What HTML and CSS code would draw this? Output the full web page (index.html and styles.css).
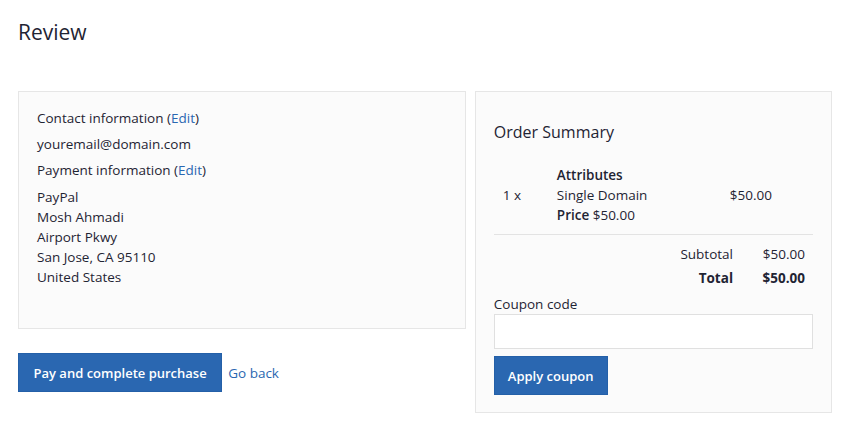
FILE: index.html
```html
<!DOCTYPE html>
<html>
<head>
<meta charset="utf-8">
<link rel="stylesheet" href="styles.css">
</head>
<body>
<div class="page">
  <h1 class="title">Review</h1>
  <div class="layout">
    <div class="left">
      <div class="panel info">
        <p class="line">Contact information (<a class="link" href="#">Edit</a>)</p>
        <p class="line">youremail@domain.com</p>
        <p class="line">Payment information (<a class="link" href="#">Edit</a>)</p>
        <div class="address">
          <div>PayPal</div>
          <div>Mosh Ahmadi</div>
          <div>Airport Pkwy</div>
          <div>San Jose, CA 95110</div>
          <div>United States</div>
        </div>
      </div>
      <div class="actions">
        <button class="btn pay">Pay and complete purchase</button>
        <a class="link back" href="#">Go back</a>
      </div>
    </div>
    <div class="panel summary">
      <h2 class="sum-title">Order Summary</h2>
      <div class="item">
        <div class="qty">1 x</div>
        <div class="desc">
          <div class="strong">Attributes</div>
          <div>Single Domain</div>
          <div><span class="strong">Price</span> $50.00</div>
        </div>
        <div class="amount">$50.00</div>
      </div>
      <div class="totals">
        <div class="trow"><span class="tlabel">Subtotal</span><span class="tval">$50.00</span></div>
        <div class="trow total"><span class="tlabel">Total</span><span class="tval">$50.00</span></div>
      </div>
      <label class="coupon-label">Coupon code</label>
      <input class="coupon-input" type="text">
      <button class="btn apply">Apply coupon</button>
    </div>
  </div>
</div>
</body>
</html>
```
FILE: styles.css
```css
html, body { margin: 0; padding: 0; background: #fff; }
body {
  font-family: "Open Sans", "Liberation Sans", sans-serif;
  color: #1f2433;
  font-size: 13.5px;
}
.page { padding: 18px 18px 0 18px; }
.title {
  margin: 0;
  font-weight: 400;
  font-size: 21px;
  line-height: 28px;
  color: #1f2433;
}
.layout {
  display: flex;
  gap: 9px;
  margin-top: 45px;
  align-items: flex-start;
}
.left { width: 449px; }
.panel {
  background: #fbfbfb;
  border: 1px solid #e6e6e6;
  box-sizing: border-box;
}
.info {
  height: 238px;
  padding: 16px 18px;
}
.line { margin: 0 0 6px 0; line-height: 20px; }
.address { line-height: 20px; margin-top: 7px; }
.link { color: #2a67b1; text-decoration: none; }
.actions {
  display: flex;
  align-items: center;
  gap: 6px;
  margin-top: 24px;
}
.btn {
  background: #2a67b1;
  border: 1px solid #2460a8;
  color: #fff;
  font-family: inherit;
  font-weight: 600;
  font-size: 13px;
  height: 39px;
  padding: 0 13px;
  cursor: pointer;
}
.pay { padding: 0 14.5px; }
.summary {
  width: 358px;
  height: 322px;
  padding: 28px 18px 0 18px;
}
.sum-title {
  margin: 0;
  font-weight: 400;
  font-size: 16px;
  line-height: 24px;
}
.item {
  display: flex;
  margin-top: 21px;
  padding-bottom: 9px;
  border-bottom: 1px solid #e3e3e3;
  line-height: 20px;
}
.qty { width: 63px; padding-left: 9px; box-sizing: border-box; align-self: center; }
.desc { width: 173px; }
.amount { align-self: center; }
.strong { font-weight: 600; }
.totals { padding: 9px 8px 0 0; }
.trow {
  display: flex;
  justify-content: flex-end;
  line-height: 20px;
  margin-bottom: 4px;
}
.tlabel { text-align: right; }
.tval { width: 72px; text-align: right; }
.total { font-weight: 700; }
.coupon-label { display: block; margin-top: 6px; line-height: 20px; }
.coupon-input {
  display: block;
  width: 100%;
  box-sizing: border-box;
  height: 35px;
  margin-top: 0;
  border: 1px solid #e0e0e0;
  background: #fff;
}
.apply { margin-top: 7px; }
```
